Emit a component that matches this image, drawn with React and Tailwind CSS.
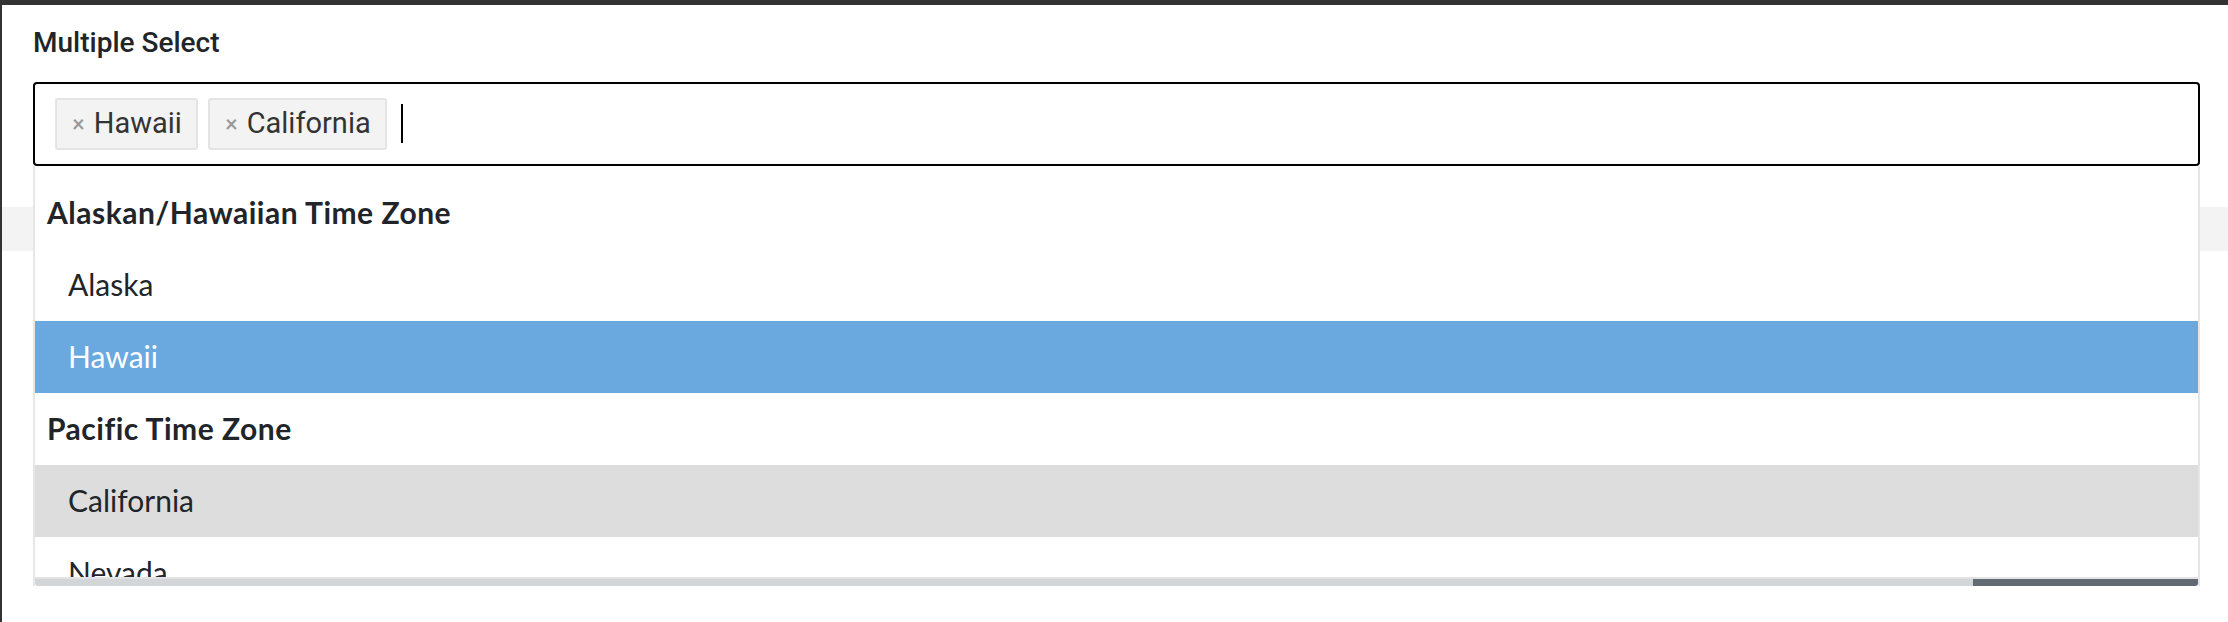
import React from 'react';

const selected = ['Hawaii', 'California'];

const groups = [
  { label: 'Alaskan/Hawaiian Time Zone', options: ['Alaska', 'Hawaii'] },
  { label: 'Pacific Time Zone', options: ['California', 'Nevada'] },
];

const Tag = ({ text }) => (
  <span className="flex h-[52px] items-center gap-[9px] rounded-[3px] border-2 border-[#e4e4e4] bg-[#f3f3f3] pl-[15px] pr-[14px]">
    <span className="text-[22px] font-bold leading-none text-[#999]">×</span>
    <span className="font-['Roboto',sans-serif] text-[29px] leading-none text-[#333]">{text}</span>
  </span>
);

const Option = ({ text, highlighted, selected }) => {
  let tone = 'bg-white text-[#212529]';
  if (highlighted) tone = 'bg-[#6aa8e0] text-white';
  else if (selected) tone = 'bg-[#dddddd] text-[#212529]';
  return (
    <div className={`flex h-[72px] shrink-0 items-center pl-[33px] text-[30px] ${tone}`}>
      {text}
    </div>
  );
};

export default function App() {
  return (
    <div className="relative h-[622px] w-full border-l-2 border-t-[5px] border-[#333] bg-white font-['Lato',sans-serif]">
      <div className="pl-[31px] pr-[28px] pt-[21px]">
        <label className="block font-['Roboto',sans-serif] text-[28px] font-medium leading-[1.2] text-[#212529]">
          Multiple Select
        </label>

        <div className="relative mt-[22px]">
          {/* selection box */}
          <div className="flex h-[84px] items-center gap-[10px] rounded-[4px] border-2 border-black pl-[20px]">
            {selected.map((s) => (
              <Tag key={s} text={s} />
            ))}
            <span className="ml-[4px] h-[39px] w-[2px] bg-black" />
          </div>

          {/* open results menu */}
          <div className="absolute left-0 right-0 top-full z-10 flex flex-col border-x-2 border-[#e6e6e6] bg-white">
            <div className="flex h-[411px] flex-col overflow-hidden pt-[11px]">
              {groups.map((g) => (
                <React.Fragment key={g.label}>
                  <div className="flex h-[72px] shrink-0 items-center pl-[12px] text-[30px] font-bold tracking-[0.5px] text-[#212529]">
                    {g.label}
                  </div>
                  {g.options.map((o) => (
                    <Option
                      key={o}
                      text={o}
                      highlighted={o === 'Hawaii'}
                      selected={o === 'California'}
                    />
                  ))}
                </React.Fragment>
              ))}
            </div>
            <div className="h-[2px] bg-[#e3e3e3]" />
            <div className="flex h-[7px] justify-end rounded-b-[3px] bg-[#d3d6d9]">
              <div className="h-full w-[225px] rounded-br-[3px] bg-[#626a73]" />
            </div>
          </div>
        </div>
      </div>

      {/* table header behind the menu */}
      <div className="mt-[41px] h-[44px] w-full bg-[#f3f3f3]" />
    </div>
  );
}
